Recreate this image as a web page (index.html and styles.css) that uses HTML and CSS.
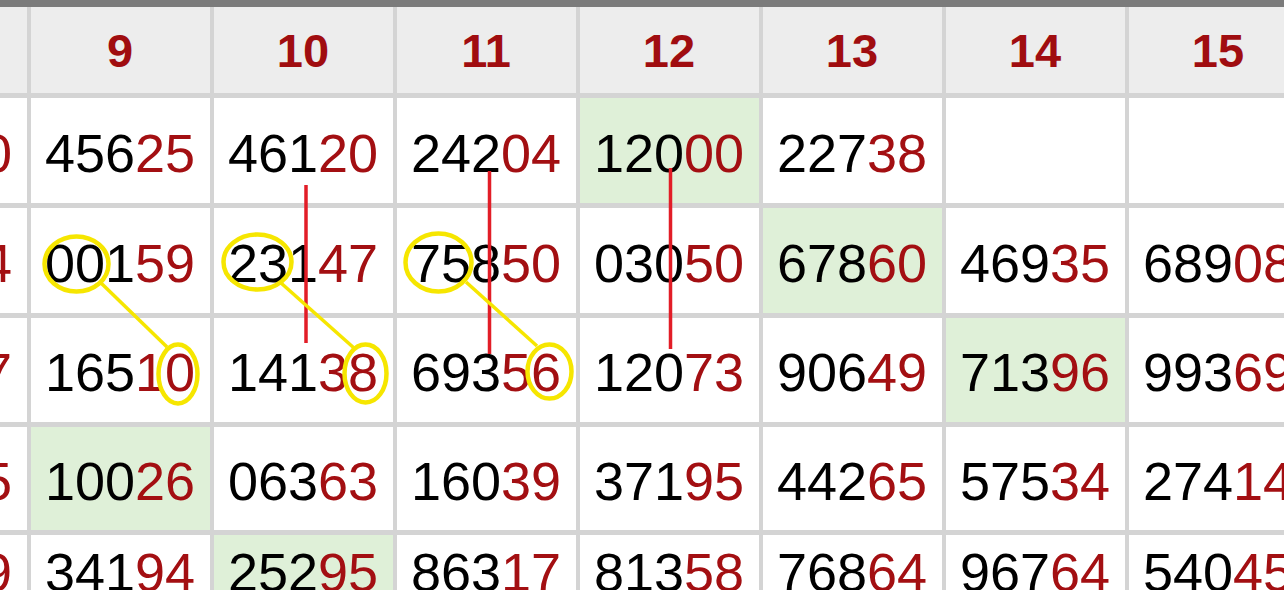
FILE: index.html
```html
<!DOCTYPE html>
<html>
<head>
    <title>Kết quả</title>
    <link rel="stylesheet" href="styles.css">
</head>
<body>
    <div class="page">
        <div class="topbar"></div>

        <div class="board">
            <div class="cell head"></div>
            <div class="cell head">9</div>
            <div class="cell head">10</div>
            <div class="cell head">11</div>
            <div class="cell head">12</div>
            <div class="cell head">13</div>
            <div class="cell head">14</div>
            <div class="cell head">15</div>

            <div class="cell">589<span class="hi">30</span></div>
            <div class="cell">456<span class="hi">25</span></div>
            <div class="cell">461<span class="hi">20</span></div>
            <div class="cell">242<span class="hi">04</span></div>
            <div class="cell green">120<span class="hi">00</span></div>
            <div class="cell">227<span class="hi">38</span></div>
            <div class="cell"></div>
            <div class="cell"></div>

            <div class="cell">312<span class="hi">84</span></div>
            <div class="cell">001<span class="hi">59</span></div>
            <div class="cell">231<span class="hi">47</span></div>
            <div class="cell">758<span class="hi">50</span></div>
            <div class="cell">030<span class="hi">50</span></div>
            <div class="cell green">678<span class="hi">60</span></div>
            <div class="cell">469<span class="hi">35</span></div>
            <div class="cell">689<span class="hi">08</span></div>

            <div class="cell">902<span class="hi">17</span></div>
            <div class="cell">165<span class="hi">10</span></div>
            <div class="cell">141<span class="hi">38</span></div>
            <div class="cell">693<span class="hi">56</span></div>
            <div class="cell">120<span class="hi">73</span></div>
            <div class="cell">906<span class="hi">49</span></div>
            <div class="cell green">713<span class="hi">96</span></div>
            <div class="cell">993<span class="hi">69</span></div>

            <div class="cell">643<span class="hi">55</span></div>
            <div class="cell green">100<span class="hi">26</span></div>
            <div class="cell">063<span class="hi">63</span></div>
            <div class="cell">160<span class="hi">39</span></div>
            <div class="cell">371<span class="hi">95</span></div>
            <div class="cell">442<span class="hi">65</span></div>
            <div class="cell">575<span class="hi">34</span></div>
            <div class="cell">274<span class="hi">14</span></div>

            <div class="cell">278<span class="hi">69</span></div>
            <div class="cell">341<span class="hi">94</span></div>
            <div class="cell green">252<span class="hi">95</span></div>
            <div class="cell">863<span class="hi">17</span></div>
            <div class="cell">813<span class="hi">58</span></div>
            <div class="cell">768<span class="hi">64</span></div>
            <div class="cell">967<span class="hi">64</span></div>
            <div class="cell">540<span class="hi">45</span></div>
        </div>

        <!-- hand drawn marks on top of the table -->
        <svg class="marks" width="1284" height="590" viewBox="0 0 1284 590">
            <g class="red">
                <line x1="306" y1="185" x2="306" y2="343" />
                <line x1="489.5" y1="171" x2="489.5" y2="354" />
                <line x1="670.5" y1="168" x2="670.5" y2="349" />
            </g>
            <g class="yellow">
                <ellipse cx="76.5" cy="264" rx="32" ry="27.5" />
                <ellipse cx="178" cy="374" rx="19.5" ry="29.5" />
                <line x1="101" y1="283" x2="167" y2="347" />

                <ellipse cx="257.5" cy="262" rx="34" ry="27.5" />
                <ellipse cx="365.5" cy="373.5" rx="21" ry="29" />
                <line x1="281" y1="283" x2="354" y2="348" />

                <ellipse cx="438.5" cy="262.5" rx="33" ry="29" />
                <ellipse cx="549.5" cy="371.5" rx="22" ry="27" />
                <line x1="466" y1="282" x2="537" y2="346" />
            </g>
        </svg>
    </div>
</body>
</html>
```

FILE: styles.css
```css
body {
    margin: 0;
    padding: 0;
    overflow: hidden;
    font-family: "Liberation Sans", Arial, sans-serif;
    background-color: #ffffff;
}

.page {
    position: relative;
    width: 1284px;
    height: 590px;
    overflow: hidden;
}

.topbar {
    height: 7px;
    background-color: #7b7b7b;
}

.board {
    display: grid;
    grid-template-columns: repeat(8, 179px);
    grid-template-rows: 86px 105px 105px 104px 103px 70px;
    column-gap: 4px;
    row-gap: 5px;
    margin-left: -152.5px;
    width: max-content;
    background-color: #d4d4d4;
}

.cell {
    display: flex;
    align-items: center;
    justify-content: center;
    padding-top: 4px;
    background-color: #ffffff;
    color: #000000;
    font-size: 54px;
    white-space: nowrap;
}

.cell.green {
    background-color: #dff0d8;
}

.cell .hi {
    color: #a30f12;
}

.cell.head {
    padding-top: 0;
    background-color: #ededed;
    color: #a00d10;
    font-size: 47px;
    font-weight: bold;
}

.marks {
    position: absolute;
    top: 0;
    left: 0;
    pointer-events: none;
}

.marks .red line {
    stroke: #e21d27;
    stroke-width: 3.5;
}

.marks .yellow ellipse,
.marks .yellow line {
    fill: none;
    stroke: #f6e600;
}

.marks .yellow ellipse {
    stroke-width: 4.5;
}

.marks .yellow line {
    stroke-width: 3.5;
}
```
